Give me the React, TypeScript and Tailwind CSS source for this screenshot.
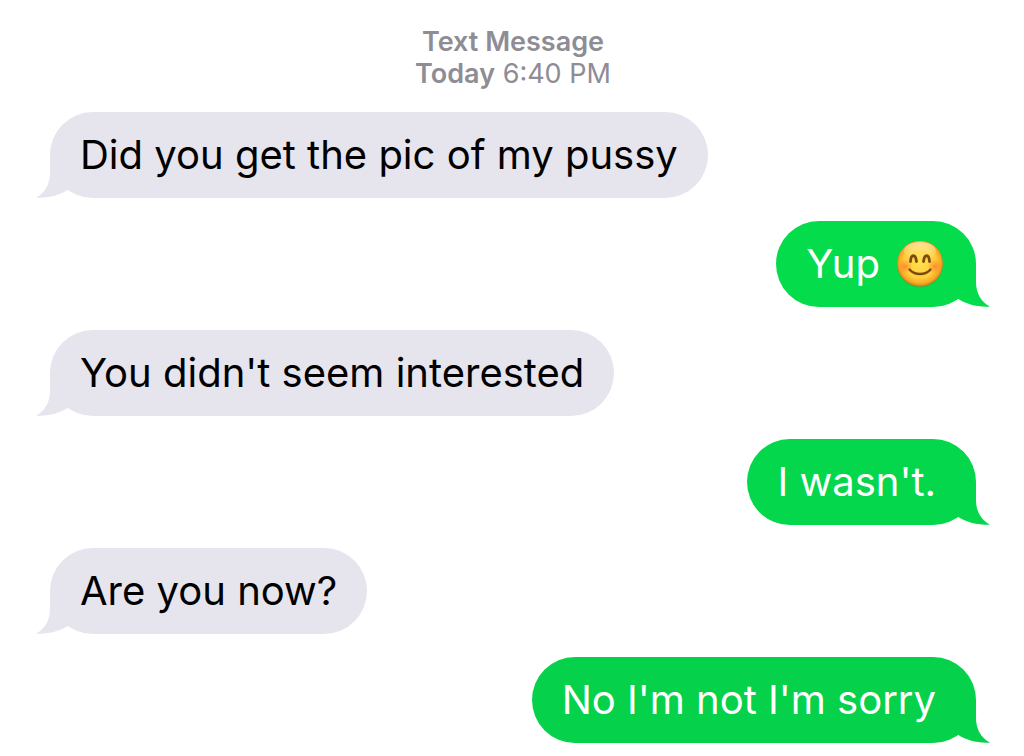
import { ReactNode } from 'react';
import { clsx } from 'clsx';

interface Message {
  id: number;
  sent: boolean;
  content: ReactNode;
  color: string;
}

function SmileEmoji() {
  return (
    <svg viewBox="0 0 48 48" className="ml-4 -mr-2 size-12 shrink-0" role="img" aria-label="Smiling face">
      <defs>
        <radialGradient id="face" cx="50%" cy="48%" r="52%">
          <stop offset="0%" stopColor="#ffe04a" />
          <stop offset="65%" stopColor="#ffcf3d" />
          <stop offset="88%" stopColor="#f9a825" />
          <stop offset="100%" stopColor="#cf821a" />
        </radialGradient>
        <linearGradient id="shine" x1="0" y1="0" x2="0" y2="1">
          <stop offset="0%" stopColor="#fff6c8" stopOpacity="0.7" />
          <stop offset="100%" stopColor="#fff0a0" stopOpacity="0" />
        </linearGradient>
        <radialGradient id="cheek">
          <stop offset="0%" stopColor="#fb6f2c" stopOpacity="0.7" />
          <stop offset="100%" stopColor="#fb7a2c" stopOpacity="0" />
        </radialGradient>
      </defs>
      <circle cx="24" cy="24.2" r="23" fill="#8a7a20" opacity="0.5" />
      <circle cx="24" cy="23.5" r="22.8" fill="url(#face)" />
      <ellipse cx="24" cy="11.5" rx="16" ry="9.5" fill="url(#shine)" />
      <circle cx="9" cy="26.5" r="7.5" fill="url(#cheek)" />
      <circle cx="39" cy="26.5" r="7.5" fill="url(#cheek)" />
      <g fill="none" stroke="#7b4a0e" strokeLinecap="round">
        <path d="M14.5 21.5C15 13.8 19.6 13.8 20.5 21.5" strokeWidth="2.8" />
        <path d="M27.5 21.5C28.4 13.8 33 13.8 33.5 21.5" strokeWidth="2.8" />
        <path d="M13.5 29.5C18.5 35.6 29.5 35.6 34.5 29.5" strokeWidth="2.4" />
      </g>
    </svg>
  );
}

const messages: Message[] = [
  { id: 1, sent: false, content: 'Did you get the pic of my pussy', color: 'bg-[#e6e4ed] text-[#e6e4ed]' },
  {
    id: 2,
    sent: true,
    content: (
      <>
        Yup
        <SmileEmoji />
      </>
    ),
    color: 'bg-[#04dc4c] text-[#04dc4c]',
  },
  { id: 3, sent: false, content: "You didn't seem interested", color: 'bg-[#e6e4ed] text-[#e6e4ed]' },
  { id: 4, sent: true, content: "I wasn't.", color: 'bg-[#04d74b] text-[#04d74b]' },
  { id: 5, sent: false, content: 'Are you now?', color: 'bg-[#e6e4ed] text-[#e6e4ed]' },
  { id: 6, sent: true, content: "No I'm not I'm sorry", color: 'bg-[#05d24a] text-[#05d24a]' },
];

function Bubble({ message }: { message: Message }) {
  const { sent, content, color } = message;

  return (
    <li
      className={clsx(
        'relative flex min-h-[86px] max-w-[80%] items-center rounded-[43px]',
        sent ? 'self-end pl-[30px] pr-10' : 'self-start px-[30px]',
        color
      )}
    >
      <svg
        viewBox="0 0 44 50"
        aria-hidden="true"
        className={clsx('absolute bottom-0 h-[50px] w-11', sent ? '-right-3.5 -scale-x-100' : '-left-3.5')}
      >
        <path
          fill="currentColor"
          d="M14 7V25C14 36 9 45 0 49.6C12 50.6 24 47 32 41.8L44 20Z"
        />
      </svg>
      <p className={clsx('relative flex items-center text-[40px] leading-[50px]', sent ? 'text-white' : 'text-black')}>
        {content}
      </p>
    </li>
  );
}

export default function App() {
  return (
    <main className="min-h-screen bg-white pl-[50px] pr-12 pt-[26px] pb-3 font-['Inter',sans-serif]">
      <header className="text-center text-[27px] leading-8 text-[#8e8c94]">
        <h1 className="font-semibold">Text Message</h1>
        <p>
          <span className="font-semibold">Today</span> 6:40 PM
        </p>
      </header>

      <ul className="mt-[22px] flex flex-col gap-[23px]">
        {messages.map((message) => (
          <Bubble key={message.id} message={message} />
        ))}
      </ul>
    </main>
  );
}
